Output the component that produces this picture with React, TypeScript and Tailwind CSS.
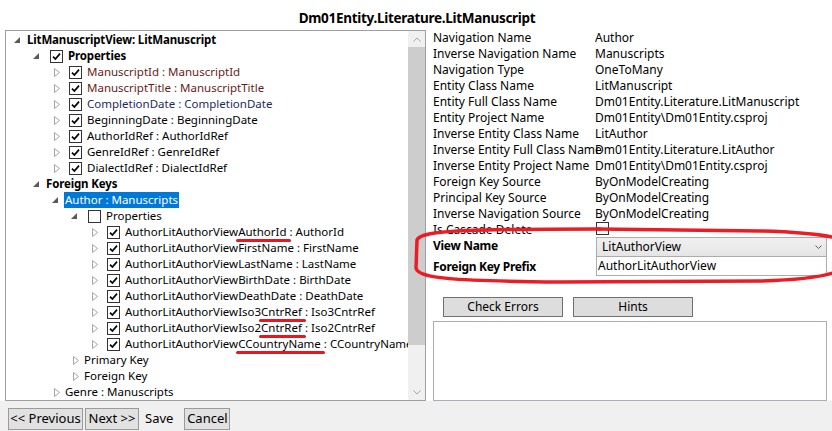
import React from "react";

type Node = {
  level: number;
  open?: boolean;
  check?: boolean | null;
  bold?: boolean;
  color?: string;
  selected?: boolean;
  pre: string;
  mark?: string;
  post?: string;
};

const tree: Node[] = [
  { level: 0, open: true, bold: true, pre: "LitManuscriptView: LitManuscript" },
  { level: 1, open: true, check: true, bold: true, pre: "Properties" },
  { level: 2, check: true, color: "text-[#6a1a1a]", pre: "ManuscriptId : ManuscriptId" },
  { level: 2, check: true, color: "text-[#6a1a1a]", pre: "ManuscriptTitle : ManuscriptTitle" },
  { level: 2, check: true, color: "text-[#1f2a5c]", pre: "CompletionDate : CompletionDate" },
  { level: 2, check: true, pre: "BeginningDate : BeginningDate" },
  { level: 2, check: true, pre: "AuthorIdRef : AuthorIdRef" },
  { level: 2, check: true, pre: "GenreIdRef : GenreIdRef" },
  { level: 2, check: true, pre: "DialectIdRef : DialectIdRef" },
  { level: 1, open: true, bold: true, pre: "Foreign Keys" },
  { level: 2, open: true, selected: true, pre: "Author : Manuscripts" },
  { level: 3, open: true, check: false, pre: "Properties" },
  { level: 4, check: true, pre: "AuthorLitAuthorView", mark: "AuthorId", post: " : AuthorId" },
  { level: 4, check: true, pre: "AuthorLitAuthorViewFirstName : FirstName" },
  { level: 4, check: true, pre: "AuthorLitAuthorViewLastName : LastName" },
  { level: 4, check: true, pre: "AuthorLitAuthorViewBirthDate : BirthDate" },
  { level: 4, check: true, pre: "AuthorLitAuthorViewDeathDate : DeathDate" },
  { level: 4, check: true, pre: "AuthorLitAuthorViewIso3", mark: "CntrRef", post: " : Iso3CntrRef" },
  { level: 4, check: true, pre: "AuthorLitAuthorViewIso2", mark: "CntrRef", post: " : Iso2CntrRef" },
  { level: 4, check: true, pre: "AuthorLitAuthorView", mark: "CCountryName", post: " : CCountryName" },
  { level: 3, pre: "Primary Key" },
  { level: 3, pre: "Foreign Key" },
  { level: 2, pre: "Genre : Manuscripts" },
];

const props = [
  ["Navigation Name", "Author"],
  ["Inverse Navigation Name", "Manuscripts"],
  ["Navigation Type", "OneToMany"],
  ["Entity Class Name", "LitManuscript"],
  ["Entity Full Class Name", "Dm01Entity.Literature.LitManuscript"],
  ["Entity Project Name", "Dm01Entity\\Dm01Entity.csproj"],
  ["Inverse Entity Class Name", "LitAuthor"],
  ["Inverse Entity Full Class Name", "Dm01Entity.Literature.LitAuthor"],
  ["Inverse Entity Project Name", "Dm01Entity\\Dm01Entity.csproj"],
  ["Foreign Key Source", "ByOnModelCreating"],
  ["Principal Key Source", "ByOnModelCreating"],
  ["Inverse Navigation Source", "ByOnModelCreating"],
];

function CheckBox({ checked }: { checked: boolean }) {
  return (
    <div className="w-[13px] h-[13px] shrink-0 border border-[#333333] bg-white flex items-center justify-center">
      {checked && (
        <svg width="9" height="9" viewBox="0 0 9 9">
          <path d="M1 4.6 L3.4 7 L8 1.6" fill="none" stroke="#000" strokeWidth="1.7" />
        </svg>
      )}
    </div>
  );
}

function Expander({ open }: { open?: boolean }) {
  return (
    <div className="w-[19px] h-4 shrink-0 flex items-center">
      {open ? (
        <svg width="6" height="6" className="ml-[5px]" viewBox="0 0 6 6">
          <path d="M6 0 L6 6 L0 6 Z" fill="#5a5a5a" />
        </svg>
      ) : (
        <svg width="6" height="9" className="ml-[7px]" viewBox="0 0 6 9">
          <path d="M0.5 0.5 L5.5 4.5 L0.5 8.5 Z" fill="none" stroke="#a6a6a6" />
        </svg>
      )}
    </div>
  );
}

function TreeRow({ n }: { n: Node }) {
  return (
    <div className="h-4 flex items-center whitespace-nowrap" style={{ paddingLeft: 3 + 19 * n.level }}>
      <Expander open={n.open} />
      {n.check !== undefined && (
        <div className="ml-[3px] mr-[5px]">
          <CheckBox checked={!!n.check} />
        </div>
      )}
      <span
        className={`leading-4 ${n.bold ? "font-bold tracking-[-0.15px]" : ""} ${n.color ?? ""} ${
          n.selected ? "bg-[#0078d7] text-white -ml-[2px] px-px" : n.check === undefined ? "-ml-px" : ""
        }`}
      >
        {n.pre}
        {n.mark && (
          <span className="relative inline-block">
            {n.mark}
            <span className="absolute left-[-2px] right-[-4px] top-[15px] h-[3px] rounded-full bg-[#e8161e]" />
          </span>
        )}
        {n.post}
      </span>
    </div>
  );
}

function Btn({ children, className }: { children: React.ReactNode; className: string }) {
  return (
    <div className={`flex items-center justify-center border ${className}`}>{children}</div>
  );
}

export default function App() {
  return (
    <div className="relative w-[832px] h-[431px] bg-white flex flex-col text-[12px] text-black font-['Noto_Sans',sans-serif] overflow-hidden">
      <div className="h-[30px] shrink-0 flex justify-center pt-[9px] pl-[2px]">
        <span className="text-[13.5px] font-bold leading-[18px] tracking-[-0.3px]">
          Dm01Entity.Literature.LitManuscript
        </span>
      </div>

      <div className="flex h-[371px] shrink-0">
        {/* tree */}
        <div className="ml-[5px] w-[421px] border border-[#a0a0a0] flex">
          <div className="flex-1 overflow-hidden pt-px text-[11.5px]">
            {tree.map((n, i) => (
              <TreeRow key={i} n={n} />
            ))}
          </div>
          <div className="w-[17px] shrink-0 bg-[#f0f0f0] flex flex-col">
            <div className="h-4 flex items-center justify-center">
              <svg width="8" height="5" viewBox="0 0 8 5">
                <path d="M0.5 4.5 L4 1 L7.5 4.5" fill="none" stroke="#a3a3a3" />
              </svg>
            </div>
            <div className="h-[298px] bg-[#cdcdcd]" />
            <div className="flex-1 flex items-end justify-center pb-[5px]">
              <svg width="8" height="5" viewBox="0 0 8 5">
                <path d="M0.5 0.5 L4 4 L7.5 0.5" fill="none" stroke="#a3a3a3" />
              </svg>
            </div>
          </div>
        </div>

        {/* details */}
        <div className="flex-1 pl-[7px] pr-[5px] flex flex-col">
          <div className="grid grid-cols-[162px_1fr] leading-4 whitespace-nowrap">
            {props.map(([k, v]) => (
              <React.Fragment key={k}>
                <div className="h-4">{k}</div>
                <div className="h-4">{v}</div>
              </React.Fragment>
            ))}
            <div className="h-[15px]">Is Cascade Delete</div>
            <div className="h-[15px] pl-px">
              <div className="w-[13px] h-[13px] border border-[#333333] bg-white" />
            </div>
          </div>

          <div className="grid grid-cols-[163px_1fr]">
            <div className="font-bold pt-px leading-4 tracking-[-0.3px]">View Name</div>
            <div className="h-5 border border-[#acacac] bg-gradient-to-b from-[#f0f0f0] to-[#e5e5e5] flex items-center justify-between pl-[5px] pr-[4px]">
              <span>LitAuthorView</span>
              <svg width="7" height="4" viewBox="0 0 7 4">
                <path d="M0.5 0.5 L3.5 3.5 L6.5 0.5" fill="none" stroke="#606060" />
              </svg>
            </div>
            <div className="font-bold pt-[2px] leading-4 tracking-[-0.3px]">Foreign Key Prefix</div>
            <div className="h-[19px] border border-[#abadb3] border-t-0 bg-white flex items-center pl-[1px]">
              AuthorLitAuthorView
            </div>
          </div>

          <div className="flex gap-[10px] ml-[10px] mt-[21px]">
            <Btn className="w-[120px] h-5 bg-[#dddddd] border-[#707070]">Check Errors</Btn>
            <Btn className="w-[120px] h-5 bg-[#dddddd] border-[#707070]">Hints</Btn>
          </div>
          <div className="mt-[4px] h-[80px] border border-[#abadb3] bg-white" />
        </div>
      </div>

      <div className="flex-1 bg-[#f0f0f0] flex items-start pt-[7px] pl-[8px] text-[13px]">
        <Btn className="w-[75px] h-[22px] bg-[#e1e1e1] border-[#9a9a9a]">&lt;&lt; Previous</Btn>
        <Btn className="ml-[2px] w-[54px] h-[22px] bg-[#e1e1e1] border-[#9a9a9a]">Next &gt;&gt;</Btn>
        <div className="ml-[6px] h-[22px] flex items-center">Save</div>
        <Btn className="ml-[11px] w-[46px] h-[22px] bg-[#e1e1e1] border-[#9a9a9a]">Cancel</Btn>
      </div>

      {/* red annotation around view name / prefix */}
      <svg className="absolute left-0 top-0 pointer-events-none" width="832" height="431" viewBox="0 0 832 431">
        <path
          d="M600 229 C 470 229, 421 230, 417 240 L 416 268 C 418 278, 450 281, 560 282 L 760 281 C 800 280, 822 277, 836 272"
          fill="none"
          stroke="#ec1c24"
          strokeWidth="3.5"
          strokeLinecap="round"
          strokeLinejoin="round"
        />
        <path
          d="M598 229 L 760 231 C 800 232, 820 234, 836 238"
          fill="none"
          stroke="#ec1c24"
          strokeWidth="3.5"
          strokeLinecap="round"
        />
      </svg>
    </div>
  );
}
